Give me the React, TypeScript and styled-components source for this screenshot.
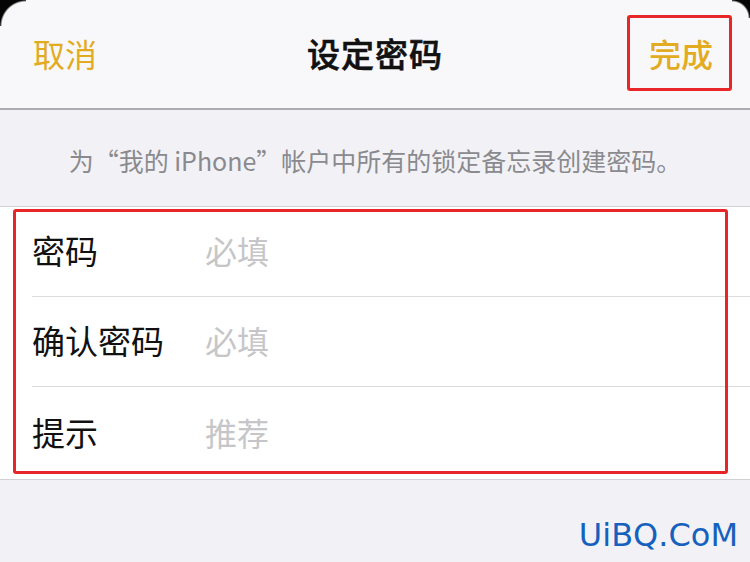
import React from "react";
import styled, { createGlobalStyle } from "styled-components";

const Global = createGlobalStyle`
  html, body { margin: 0; padding: 0; background: #f2f2f6; }
  body { font-family: "Noto Sans CJK SC", "Noto Sans", sans-serif; }
  * { box-sizing: border-box; }
`;

const Screen = styled.div`
  position: relative;
  width: 750px;
  height: 562px;
  background: #f2f2f6;
  overflow: hidden;
  display: flex;
  flex-direction: column;

  &::before,
  &::after {
    content: "";
    position: absolute;
    top: 0;
    z-index: 5;
    pointer-events: none;
  }
  &::before {
    left: 0;
    width: 26px;
    height: 26px;
    background: radial-gradient(circle at 100% 100%, transparent 24px, #050505 26px);
  }
  &::after {
    right: 0;
    width: 18px;
    height: 18px;
    background: radial-gradient(circle at 0% 100%, transparent 16px, #050505 18px);
  }
`;

const NavBar = styled.header`
  height: 110px;
  flex: none;
  background: #f8f8fa;
  border-bottom: 2px solid #adadb1;
  display: grid;
  grid-template-columns: 1fr auto 1fr;
  align-items: center;
  padding: 0 18px;
`;

const NavButton = styled.button<{ $highlight?: boolean; $bold?: boolean }>`
  font-family: "Noto Sans CJK SC", sans-serif;
  font-size: 32px;
  font-weight: ${(p) => (p.$bold ? 500 : 400)};
  color: #e3ab1f;
  background: none;
  border: ${(p) => (p.$highlight ? "3px solid #e8262a" : "none")};
  border-radius: 3px;
  padding: ${(p) => (p.$highlight ? "14px 16px 14px 19px" : "0")};
  margin-left: ${(p) => (p.$highlight ? "0" : "15px")};
  line-height: 42px;
  margin-top: -2px;
  justify-self: ${(p) => (p.$highlight ? "end" : "start")};
  cursor: pointer;
`;

const Title = styled.h1`
  margin: -2px 0 0;
  font-size: 33px;
  font-weight: 500;
  -webkit-text-stroke: 0.6px #111;
  color: #111;
  letter-spacing: 1px;
  line-height: 42px;
`;

const Notice = styled.p`
  margin: 0;
  height: 97px;
  flex: none;
  display: flex;
  align-items: center;
  justify-content: center;
  padding-top: 3px;
  font-size: 25px;
  color: #8a8a8e;
  border-bottom: 1px solid #d2d2d6;
`;

const FormSection = styled.section`
  position: relative;
  flex: none;
  background: #fff;
  border-bottom: 1px solid #d2d2d6;
  padding-left: 32px;
`;

const Row = styled.div<{ $last?: boolean }>`
  height: ${(p) => (p.$last ? "92px" : "90px")};
  display: flex;
  align-items: center;
  border-bottom: ${(p) => (p.$last ? "none" : "1px solid #dcdcdf")};
  padding-bottom: 3px;
`;

const Label = styled.span`
  width: 173px;
  flex: none;
  font-size: 33px;
  color: #111;
`;

const Placeholder = styled.span`
  font-size: 32px;
  color: #c6c6c8;
`;

const Highlight = styled.div`
  position: absolute;
  left: 13px;
  top: 2px;
  width: 715px;
  height: 265px;
  border: 3px solid #e8262a;
  border-radius: 3px;
  pointer-events: none;
`;

const Footer = styled.footer`
  flex: 1;
  display: flex;
  align-items: flex-end;
  justify-content: flex-end;
  padding: 0 12px 6px 0;
`;

const Watermark = styled.span`
  font-family: "DejaVu Sans", "Verdana", sans-serif;
  font-size: 32px;
  color: #1661bd;
  line-height: 42px;
`;

const rows = [
  { label: "密码", hint: "必填" },
  { label: "确认密码", hint: "必填" },
  { label: "提示", hint: "推荐" },
];

export default function App() {
  return (
    <>
      <Global />
      <Screen>
        <NavBar>
          <NavButton>取消</NavButton>
          <Title>设定密码</Title>
          <NavButton $highlight $bold>完成</NavButton>
        </NavBar>
        <Notice>为“我的 iPhone”帐户中所有的锁定备忘录创建密码。</Notice>
        <FormSection>
          {rows.map((r, i) => (
            <Row key={r.label} $last={i === rows.length - 1}>
              <Label>{r.label}</Label>
              <Placeholder>{r.hint}</Placeholder>
            </Row>
          ))}
          <Highlight />
        </FormSection>
        <Footer>
          <Watermark>UiBQ.CoM</Watermark>
        </Footer>
      </Screen>
    </>
  );
}
